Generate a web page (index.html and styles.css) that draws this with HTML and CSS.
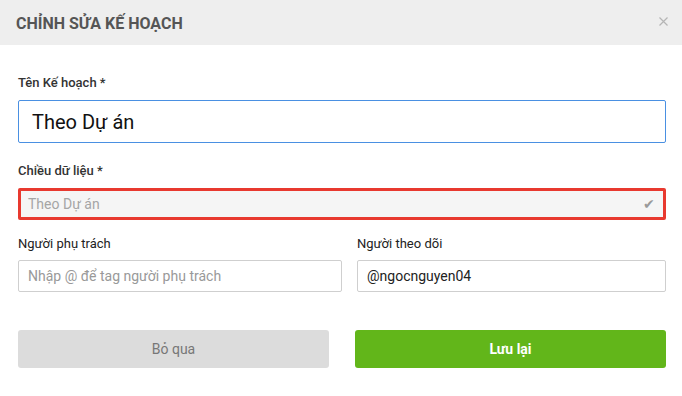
FILE: index.html
```html
<!DOCTYPE html>
<html lang="vi">

<head>
  <meta charset="UTF-8">
  <meta name="viewport" content="width=device-width, initial-scale=1.0">
  <title>Chỉnh sửa kế hoạch</title>
  <link rel="stylesheet" href="styles.css">
</head>

<body>
  <div class="modal">
    <div class="modalHead">
      <span class="modalTitle">CHỈNH SỬA KẾ HOẠCH</span>
      <span class="closeBtn">
        <svg width="9" height="9" viewBox="0 0 9 9">
          <path d="M0.5 0.5 L8.5 8.5 M8.5 0.5 L0.5 8.5" stroke="#b5b5b5" stroke-width="1.2" fill="none" />
        </svg>
      </span>
    </div>

    <div class="modalBody">
      <div class="field">
        <label class="label">Tên Kế hoạch *</label>
        <div class="input inputBig">Theo Dự án</div>
      </div>

      <div class="field">
        <label class="label">Chiều dữ liệu *</label>
        <div class="input inputError">
          <span>Theo Dự án</span>
          <span class="check">&#10004;</span>
        </div>
      </div>

      <div class="row">
        <div class="field">
          <label class="label labelLight">Người phụ trách</label>
          <div class="input inputSmall placeholder">Nhập @ để tag người phụ trách</div>
        </div>
        <div class="field">
          <label class="label labelLight">Người theo dõi</label>
          <div class="input inputSmall">@ngocnguyen04</div>
        </div>
      </div>

      <div class="btns">
        <div class="btn btnCancel">Bỏ qua</div>
        <div class="btn btnSave">Lưu lại</div>
      </div>
    </div>
  </div>
</body>

</html>
```

FILE: styles.css
```css
body {
  margin: 0;
  background-color: #fff;
  font-family: Roboto, "Noto Sans", sans-serif;
  color: #333;
}

.modal {
  width: 682px;
  height: 396px;
  overflow: hidden;
}

.modalHead {
  height: 45px;
  background-color: #eeeeee;
  display: flex;
  align-items: center;
  justify-content: space-between;
  padding: 0 14px 0 16px;
}

.modalTitle {
  font-family: Roboto, sans-serif;
  font-weight: bold;
  font-size: 16px;
  color: #555;
  padding-top: 1px;
}

.closeBtn {
  display: flex;
  margin-top: -2px;
}

.modalBody {
  padding: 30px 16px 0 18px;
}

.field {
  display: flex;
  flex-direction: column;
}

.label {
  font-size: 13px;
  font-weight: 500;
  color: #333;
  line-height: 16px;
  margin-bottom: 9px;
}

.labelLight {
  font-weight: 400;
  color: #222;
  margin-bottom: 8px;
}

.input {
  box-sizing: border-box;
  border: 1px solid #cfcfcf;
  border-radius: 2px;
  display: flex;
  align-items: center;
  justify-content: space-between;
}

.inputBig {
  height: 43px;
  border-color: #4a90e2;
  font-size: 20px;
  color: #111;
  padding-left: 13px;
  margin-bottom: 20px;
}

.inputError {
  height: 32px;
  border: 3px solid #e8392f;
  background-color: #f5f5f5;
  font-size: 14px;
  color: #a5a5a5;
  padding: 0 8px 0 7px;
  margin-bottom: 16px;
}

.check {
  font-size: 14px;
  color: #9a9a9a;
}

.row {
  display: grid;
  grid-template-columns: 324px 309px;
  column-gap: 15px;
}

.inputSmall {
  height: 32px;
  font-size: 14px;
  color: #222;
  padding-left: 9px;
}

.placeholder {
  color: #999;
}

.btns {
  display: grid;
  grid-template-columns: 311px 311px;
  column-gap: 26px;
  margin-top: 38px;
}

.btn {
  height: 38px;
  border-radius: 3px;
  display: flex;
  align-items: center;
  justify-content: center;
  font-size: 14px;
}

.btnCancel {
  background-color: #dcdcdc;
  color: #777;
}

.btnSave {
  background-color: #62b61a;
  color: #fff;
  font-weight: bold;
}
```
